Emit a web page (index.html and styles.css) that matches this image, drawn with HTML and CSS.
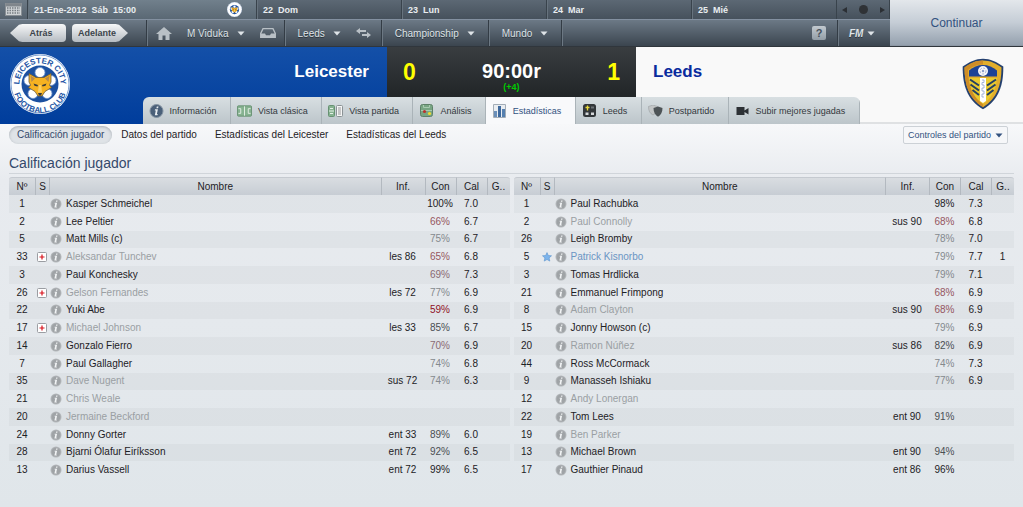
FILE: index.html
```html
<!DOCTYPE html>
<html lang="es">
<head>
  <meta charset="UTF-8"/>
  <meta name="viewport" content="width=device-width, initial-scale=1.0"/>
  <title>Leicester 0 - 1 Leeds</title>
  <link rel="stylesheet" href="styles.css">
</head>
<body>

<!-- shared icons -->
<svg class="sprite" aria-hidden="true">
  <symbol id="i-info" viewBox="0 0 12 12">
    <circle cx="6" cy="6" r="5.5" fill="#b3b7ba"/>
    <circle cx="6" cy="6" r="4.5" fill="#9fa3a6"/>
    <path d="M6.2 2.4h1.4l-.3 1.3H5.9z M4.7 4.7h2.4l-.9 4h.7l-.2.9H4.4l.9-4h-.8z" fill="#f2f4f5"/>
  </symbol>
  <symbol id="i-inj" viewBox="0 0 10 10">
    <rect x=".5" y=".5" width="9" height="9" rx="1" fill="#fff" stroke="#9a9da2"/>
    <path d="M4.4 2.5h1.2v1.9h1.9v1.2H5.6v1.900H4.400V5.600H2.500V4.400h1.900z" fill="#d8121c"/>
  </symbol>
  <symbol id="i-star" viewBox="0 0 10 10">
    <path d="M5 .6l1.300 2.900 3.200.3-2.400 2.100.7 3.200L5 7.500 2.200 9.100l.7-3.200L.5 3.800l3.200-.3z" fill="#7db4ec" stroke="#5a93cf" stroke-width=".6"/>
  </symbol>
  <symbol id="i-down" viewBox="0 0 8 5">
    <path d="M.5.5h7L4 4.500z" fill="currentColor"/>
  </symbol>
  <symbol id="i-lcfc" viewBox="0 0 60 60">
    <circle cx="30" cy="30" r="30" fill="#fff"/>
    <circle cx="30" cy="30" r="29" fill="none" stroke="#5c86c4" stroke-width=".8"/>
    <circle cx="30" cy="30" r="18.500" fill="#1b50a0"/>
    <g fill="#fff" stroke="#6f93cb" stroke-width=".8">
      <circle cx="30" cy="18.500" r="5"/><circle cx="41" cy="26.500" r="5"/><circle cx="37" cy="39.500" r="5"/>
      <circle cx="23" cy="39.500" r="5"/><circle cx="19" cy="26.500" r="5"/>
    </g>
    <path d="M19 19.500l7 4h8l7-4v8.500l-1.500 3 2 2.500-6.500 4-3 4.500h-4l-3-4.500-6.500-4 2-2.500L19 28z" fill="#f6b221" stroke="#6d5a3a" stroke-width=".8"/>
    <path d="M20.500 21.500l4.500 3-3.500 3.500zM39.500 21.500l-4.500 3 3.500 3.500z" fill="#b98a4a"/>
    <path d="M23.500 29.500l4.500 1.500-.5 1.500-3-.8zM36.500 29.500L32 31l.5 1.500 3-.8zM28 39h4l-1 2.500h-2z" fill="#3b3a38"/>
    <path d="M29 31l-1.200 7.500h4.400L31 31z" fill="#fbcf62"/>
  </symbol>
</svg>

<header class="topbar">
  <div class="bars">
    <div class="calendar">
      <button class="cal-btn" aria-label="Calendario">
        <svg width="17" height="13" viewBox="0 0 17 13"><rect x=".5" y=".5" width="16" height="12" fill="#cfd3d6" stroke="#888e94"/><path d="M1 2h15" stroke="#80868c" stroke-width="3"/><path d="M2 5h13M2 7.500h13M2 10h13" stroke="#777d83" stroke-width="1.500" stroke-dasharray="1.500 1"/></svg>
      </button>
      <div class="day today"><b>21-Ene-2012</b> <b>Sáb</b> <b>15:00</b>
        <svg class="mini-crest" width="15" height="15"><use href="#i-lcfc"/></svg>
      </div>
      <div class="day"><b>22</b> <b>Dom</b></div>
      <div class="day"><b>23</b> <b>Lun</b></div>
      <div class="day"><b>24</b> <b>Mar</b></div>
      <div class="day"><b>25</b> <b>Mié</b></div>
      <div class="pager">
        <button aria-label="Anterior"><svg width="5" height="6" viewBox="0 0 5 6"><path d="M5 0v6L0 3z" fill="#2b2f34"/></svg></button>
        <button aria-label="Hoy"><svg width="9" height="9" viewBox="0 0 9 9"><circle cx="4.500" cy="4.500" r="4.500" fill="#2f3236"/></svg></button>
        <button aria-label="Siguiente"><svg width="5" height="6" viewBox="0 0 5 6"><path d="M0 0v6l5-3z" fill="#2b2f34"/></svg></button>
      </div>
    </div>

    <nav class="menubar">
      <div class="history">
        <button class="back">Atrás</button>
        <button class="forward">Adelante</button>
      </div>
      <div class="group user">
        <button aria-label="Inicio"><svg width="16" height="13" viewBox="0 0 16 13"><path d="M8 0l8 7h-2.500v6H9.500V8.500h-3V13h-4V7H0z" fill="#b9c0c6"/></svg></button>
        <button class="menu">M Viduka <svg width="8" height="5"><use href="#i-down"/></svg></button>
        <button aria-label="Mensajes"><svg width="16" height="10" viewBox="0 0 16 10"><path d="M3 .7h10l2.300 4.800v3.800H.7V5.500z" fill="none" stroke="#b9c0c6" stroke-width="1.300"/><path d="M.7 5.500H5l1 1.700h4l1-1.700h4.300v4H.7z" fill="#b9c0c6"/></svg></button>
      </div>
      <div class="group club">
        <button class="menu">Leeds <svg width="8" height="5"><use href="#i-down"/></svg></button>
        <button aria-label="Cambiar"><svg width="15" height="10" viewBox="0 0 15 10"><path d="M0 3l4-3v2h6v2H4v2zM15 7l-4-3v2H6v2h5v2z" fill="#b9c0c6"/></svg></button>
      </div>
      <div class="group"><button class="menu">Championship <svg width="8" height="5"><use href="#i-down"/></svg></button></div>
      <div class="group"><button class="menu">Mundo <svg width="8" height="5"><use href="#i-down"/></svg></button></div>
      <div class="group help"><button class="help-btn">?</button></div>
      <div class="group fm"><button class="menu"><b>FM</b> <svg width="8" height="5"><use href="#i-down"/></svg></button></div>
    </nav>
  </div>
  <button class="continue">Continuar</button>
</header>

<section class="match">
  <div class="team home">
    <svg width="60" height="60" viewBox="0 0 60 60" aria-label="Leicester City">
      <use href="#i-lcfc" width="60" height="60"/>
      <defs>
        <path id="arc-top" d="M12.200 40.300a20.600 20.600 0 1 1 35.600 0"/>
        <path id="arc-bottom" d="M3.200 32a26.800 26.800 0 0 0 53.600 0"/>
      </defs>
      <text class="crest-text"><textPath href="#arc-top" startOffset="50%">LEICESTER CITY</textPath></text>
      <text class="crest-text"><textPath href="#arc-bottom" startOffset="50%">FOOTBALL CLUB</textPath></text>
    </svg>
    <h2>Leicester</h2>
  </div>
  <div class="score">
    <span class="goals">0</span>
    <div class="clock"><span>90:00r</span><small>(+4)</small></div>
    <span class="goals">1</span>
  </div>
  <div class="team away">
    <h2>Leeds</h2>
    <svg width="42" height="52" viewBox="0 0 42 52" aria-label="Leeds United">
      <path d="M21 .7C28 .7 35 4 41.300 8.500 41.500 27 37 42 21 51.300 5 42 .5 27 .7 8.500 7 4 14 .7 21 .7z" fill="#24406f"/>
      <path d="M21 2.500c7 0 13 2.800 18.500 7C39.500 27 35 40.500 21 49.300 7 40.500 2.500 27 2.500 9.500 8 5.300 14 2.500 21 2.500z" fill="#e2ae2c"/>
      <path d="M2.500 9.500C8 5.300 14 2.500 21 2.500v4C15 6.500 10 8.500 6 12c0 14 4 26 15 34v3.300C7 40.500 2.500 27 2.500 9.500z" fill="#cf8d27"/>
      <path d="M7 18.500v-6C11 9 16 7 21 7s10 2 14 5.500v6z" fill="#1c4296"/>
      <path d="M7 20h28C34 31 30 40 21 46 12 40 8 31 7 20z" fill="#e9c92f"/>
      <path d="M8 21.500l9 6M8.500 26.500l8.500 6M10.500 32l6.500 5M34 21.500l-9 6M33.500 26.500l-8.500 6M31.500 32L25 37" stroke="#243f63" stroke-width="2"/>
      <path d="M18 20h6v23l-3 2-3-2z" fill="#fff"/>
      <path d="M20 22h2v2.500h-2V27h2v3h-2v3h2v3h-2v3h2" fill="none" stroke="#93a4d0" stroke-width=".8"/>
      <circle cx="21" cy="13" r="5" fill="#f5f5f8"/>
      <circle cx="21" cy="13" r="3" fill="none" stroke="#a9b5d6" stroke-dasharray="2 1.500"/>
      <circle cx="21" cy="13" r="1.200" fill="#8b9cc8"/>
    </svg>
  </div>

  <nav class="tabs">
    <a href="#"><svg width="15" height="14" viewBox="0 0 14 14"><circle cx="7" cy="7" r="6.500" fill="#4a6079" stroke="#8392a1"/><path d="M7.300 2.500H9l-.4 1.700H6.900zM5.500 5.300h2.900l-1 4.700h.8l-.2 1.200H5.300L6.300 6.500h-1z" fill="#e8edf1"/></svg>Información</a>
    <a href="#"><svg width="15" height="12" viewBox="0 0 16 12"><rect x=".5" y=".5" width="15" height="11" rx="1" fill="#86b290" stroke="#679172"/><path d="M8 1v10M1.500 3.500H4v5H1.500M14.500 3.500H12v5h2.500" fill="none" stroke="#e5f0e6"/></svg>Vista clásica</a>
    <a href="#"><svg width="15" height="12" viewBox="0 0 15 12"><rect x=".5" y=".5" width="6" height="11" rx="1" fill="#86b290" stroke="#679172"/><path d="M1 6h5M2 3.500h3M2 8.500h3" stroke="#e5f0e6"/><rect x="8.500" y=".5" width="6" height="11" rx="1" fill="#f4f5f5" stroke="#8b9295"/><path d="M10 3h3M10 5h3M10 7h3M10 9h3" stroke="#999"/></svg>Vista partida</a>
    <a href="#"><svg width="15" height="13" viewBox="0 0 13 13"><rect x=".5" y=".5" width="12" height="12" rx="2" fill="#78a583" stroke="#5e8168"/><path d="M3.500 1v2.500h6V1M1 6.500h11" fill="none" stroke="#a9cbb0"/><circle cx="4.500" cy="7.500" r="1.600" fill="#b9332c"/><circle cx="9.500" cy="9.500" r="1.600" fill="#f0dc2d"/></svg>Análisis</a>
    <a href="#" class="active"><svg width="15" height="14" viewBox="0 0 13 14"><path d="M.5.5h12v13H.5z" fill="#e9edf1" stroke="#a3adb7"/><path d="M1 7h3v6H1z" fill="#6a8fb9"/><path d="M5 2h3v11H5z" fill="#3e699d"/><path d="M9 5h3v8H9z" fill="#5580b0"/></svg>Estadísticas</a>
    <a href="#"><svg width="15" height="13" viewBox="0 0 13 13"><rect width="13" height="13" rx="2.500" fill="#33373a"/><path d="M4.500 1.500v5M2.500 3.500h4" stroke="#e9d93a" stroke-width="1.300"/><path d="M8 2.500h3v2H8z" fill="#6d7275"/><path d="M2.500 8.500h3v2.500h-3zM8 8.500h3V11H8z" fill="#d5d8da"/></svg>Leeds</a>
    <a href="#"><svg width="15" height="12" viewBox="0 0 14 12"><path d="M0 1.500L4.500 0 9 1.500C9 6 7.500 8.500 4.500 10 1.500 8.500 0 6 0 1.500z" fill="#c3c6c7" stroke="#9ba0a2" stroke-width=".6"/><path d="M5 3l4.500-1.500L14 3c0 4-1.500 7-4.500 8.800C6.500 10 5 7 5 3z" fill="#4e5457"/></svg>Postpartido</a>
    <a href="#"><svg width="15" height="8" viewBox="0 0 12 8"><path d="M0 0h8v8H0zM8 3.500L12 1v6.500L8 5z" fill="#2d3135"/></svg>Subir mejores jugadas</a>
  </nav>
</section>

<main>
  <div class="subnav">
    <a href="#" class="active">Calificación jugador</a>
    <a href="#">Datos del partido</a>
    <a href="#">Estadísticas del Leicester</a>
    <a href="#">Estadísticas del Leeds</a>
    <button class="controls">Controles del partido <svg width="8" height="5"><use href="#i-down"/></svg></button>
  </div>

  <h1>Calificación jugador</h1>

  <div class="ratings">
    <table id="leicester"></table>
    <table id="leeds"></table>
  </div>
</main>

<script>
  // number, status icon, name, name style, info, condition, rating, goals
  const leicester = [
    [1, "", "Kasper Schmeichel", "", "", 100, "7.0"],
    [2, "", "Lee Peltier", "", "", 66, "6.7"],
    [5, "", "Matt Mills (c)", "", "", 75, "6.7"],
    [33, "inj", "Aleksandar Tunchev", "out", "les 86", 65, "6.8"],
    [3, "", "Paul Konchesky", "", "", 69, "7.3"],
    [26, "inj", "Gelson Fernandes", "out", "les 72", 77, "6.9"],
    [22, "", "Yuki Abe", "", "", 59, "6.9"],
    [17, "inj", "Michael Johnson", "out", "les 33", 85, "6.7"],
    [14, "", "Gonzalo Fierro", "", "", 70, "6.9"],
    [7, "", "Paul Gallagher", "", "", 74, "6.8"],
    [35, "", "Dave Nugent", "out", "sus 72", 74, "6.3"],
    [21, "", "Chris Weale", "out"],
    [20, "", "Jermaine Beckford", "out"],
    [24, "", "Donny Gorter", "", "ent 33", 89, "6.0"],
    [28, "", "Bjarni Ólafur Eiríksson", "", "ent 72", 92, "6.5"],
    [13, "", "Darius Vassell", "", "ent 72", 99, "6.5"]
  ];
  const leeds = [
    [1, "", "Paul Rachubka", "", "", 98, "7.3"],
    [2, "", "Paul Connolly", "out", "sus 90", 68, "6.8"],
    [26, "", "Leigh Bromby", "", "", 78, "7.0"],
    [5, "star", "Patrick Kisnorbo", "best", "", 79, "7.7", 1],
    [3, "", "Tomas Hrdlicka", "", "", 79, "7.1"],
    [21, "", "Emmanuel Frimpong", "", "", 68, "6.9"],
    [8, "", "Adam Clayton", "out", "sus 90", 68, "6.9"],
    [15, "", "Jonny Howson (c)", "", "", 79, "6.9"],
    [20, "", "Ramon Núñez", "out", "sus 86", 82, "6.9"],
    [44, "", "Ross McCormack", "", "", 74, "7.3"],
    [9, "", "Manasseh Ishiaku", "", "", 77, "6.9"],
    [12, "", "Andy Lonergan", "out"],
    [22, "", "Tom Lees", "", "ent 90", 91],
    [19, "", "Ben Parker", "out"],
    [13, "", "Michael Brown", "", "ent 90", 94],
    [17, "", "Gauthier Pinaud", "", "ent 86", 96]
  ];

  function conClass(con) {
    if (con < 60) return "critical";
    if (con < 69) return "low";
    if (con < 72) return "tired";
    if (con < 80) return "mid";
    if (con < 95) return "good";
    return "full";
  }

  function row([num, status, name, style, inf = "", con, cal = "", goals = ""]) {
    const icon = status ? `<svg width="10" height="10"><use href="#i-${status}"/></svg>` : "";
    return `<tr>
      <td>${num}</td>
      <td class="status">${icon}</td>
      <td class="name ${style}"><div><button aria-label="Información de ${name}"><svg width="12" height="12"><use href="#i-info"/></svg></button>${name}</div></td>
      <td>${inf}</td>
      <td class="${con ? conClass(con) : ""}">${con ? con + "%" : ""}</td>
      <td>${cal}</td>
      <td>${goals}</td>
    </tr>`;
  }

  function fillTable(id, players) {
    document.getElementById(id).innerHTML = `
      <thead><tr>
        <th class="c-num">Nº</th><th class="c-status">S</th><th>Nombre</th><th class="c-inf">Inf.</th>
        <th class="c-con">Con</th><th class="c-cal">Cal</th><th class="c-goals">G..</th>
      </tr></thead>
      <tbody>${players.map(row).join("")}</tbody>`;
  }

  fillTable("leicester", leicester);
  fillTable("leeds", leeds);
</script>
</body>
</html>
```
FILE: styles.css
```css
:root {
  --ink: #1d2125;
  --navy: #34496b;
  --bar-text: #e9edf0;
}

* {
  box-sizing: border-box;
}

body {
  margin: 0;
  min-height: 100vh;
  font-family: "Liberation Sans", Arial, sans-serif;
  font-size: 10px;
  color: var(--ink);
  background: linear-gradient(#f7f8fa 124px, #e8ebef 180px, #e5e9ed 320px, #e0e6ea);
}

button {
  padding: 0;
  border: none;
  background: none;
  font: inherit;
  color: inherit;
  cursor: pointer;
}

a {
  color: inherit;
  text-decoration: none;
}

svg {
  display: block;
  flex: none;
}

.sprite {
  display: none;
}

/* top bars */
.topbar {
  display: grid;
  grid-template-columns: 1fr 133px;
  border-bottom: 1px solid #30363c;
}

.calendar {
  display: grid;
  grid-template-columns: 28px 229fr 145fr 145fr 145fr 145fr 53px;
  height: 19px;
  font-size: 9px;
  color: var(--bar-text);
  background: linear-gradient(#5c6874, #46515c);
}

.calendar > * {
  display: flex;
  align-items: center;
  border-right: 1px solid #39434c;
}

.cal-btn {
  justify-content: center;
  background: linear-gradient(#6d7a86, #55616d);
}

.day {
  gap: 5px;
  padding-left: 5px;
  border-left: 1px solid #67737e;
}

.today {
  background: linear-gradient(#71808c, #5a6874);
}

.mini-crest {
  margin-left: auto;
  margin-right: 14px;
}

.pager {
  justify-content: center;
  gap: 12px;
}

.menubar {
  display: flex;
  height: 27px;
  color: #dfe4e8;
  background: linear-gradient(#6c7986, #3b454f);
  border-top: 1px solid #8390a0;
}

.history {
  display: flex;
  align-items: center;
  gap: 6px;
  width: 146px;
  padding-left: 10px;
}

.history button {
  width: 56px;
  height: 18px;
  font-size: 9px;
  font-weight: bold;
  color: #3c444c;
  background: linear-gradient(#f7f8f9, #b5bbc1);
}

.history .back {
  padding-left: 6px;
  border-radius: 4px;
  clip-path: polygon(0 50%, 16% 4%, 22% 0, 100% 0, 100% 100%, 22% 100%, 16% 96%);
}

.history .forward {
  padding-right: 6px;
  border-radius: 4px;
  clip-path: polygon(100% 50%, 84% 4%, 78% 0, 0 0, 0 100%, 78% 100%, 84% 96%);
}

.group {
  display: flex;
  align-items: center;
  padding: 0 13px;
  border-left: 1px solid #333c45;
  box-shadow: inset 1px 0 #6c7883;
}

.user {
  gap: 15px;
  padding: 0 8px 0 9px;
}

.club {
  gap: 15px;
  padding-right: 10px;
}

.menu {
  display: flex;
  align-items: center;
  gap: 8px;
  text-shadow: 0 1px #2c343b;
}

.fm {
  width: 53px;
  padding: 0 11px;
}

.fm b {
  font-style: italic;
}

.fm .menu {
  gap: 4px;
}

.help {
  flex: 1;
  justify-content: flex-end;
  padding-right: 11px;
}

.help-btn {
  width: 14px;
  height: 14px;
  border-radius: 2px;
  font-weight: bold;
  font-size: 11px;
  line-height: 14px;
  color: #46515c;
  background: linear-gradient(#c2c9cf, #929da6);
}

.continue {
  font-size: 12px;
  color: #33527f;
  background: linear-gradient(#e3e7eb, #c5cdd6 50%, #95a1ae);
  border-bottom: 1px solid #8d98a5;
}

/* scoreboard */
.match {
  display: grid;
  grid-template-columns: 1fr 249px 1fr;
  grid-template-rows: 50px 27px;
}

.team {
  grid-row: 1 / 3;
  display: flex;
  justify-content: space-between;
}

.team h2 {
  margin: 0;
  font-size: 17px;
  line-height: 50px;
}

.home {
  grid-column: 1;
  padding: 7px 18px 0 10px;
  color: #fff;
  background: linear-gradient(#1450a8, #003d9c);
}

.home h2,
.away h2 {
  margin-top: -7px;
}

.away {
  grid-column: 3;
  padding: 7px 19px 0 17px;
  color: #0a2b9e;
  background: #f9f9f9;
  border-bottom: 2px solid #dfe1e3;
}

.away svg {
  margin-top: 4px;
}

.crest-text {
  font-size: 8px;
  font-weight: bold;
  text-anchor: middle;
  fill: #2455a4;
}

.score {
  grid-column: 2;
  grid-row: 1;
  display: flex;
  justify-content: space-between;
  align-items: center;
  padding: 0 16px;
  color: #fff;
  background: linear-gradient(#393d40, #212527);
}

.goals {
  font-size: 23px;
  font-weight: bold;
  color: #ff0;
}

.clock {
  display: flex;
  flex-direction: column;
  align-items: center;
  padding-top: 7px;
  font-size: 20px;
  font-weight: bold;
  line-height: 22px;
}

.clock small {
  font-size: 9px;
  line-height: 10px;
  color: #0c0;
}

.tabs {
  grid-column: 1 / -1;
  grid-row: 2;
  justify-self: center;
  display: flex;
  width: 717px;
  margin-right: 21px;
  border-radius: 6px 6px 0 0;
  overflow: hidden;
}

.tabs a {
  flex: auto;
  display: flex;
  align-items: center;
  gap: 6px;
  padding: 0 8px 0 6px;
  font-size: 9px;
  color: #33383c;
  background: linear-gradient(#d8dfe2, #bcc5ca);
  border-right: 1px solid #aab3b8;
}

.tabs .active {
  color: #33527f;
  background: #f8f9fb;
}

/* page */
main {
  padding: 2px 9px 0;
}

.subnav {
  display: flex;
  align-items: center;
  height: 18px;
}

.subnav a {
  padding: 0 9px;
  line-height: 18px;
}

.subnav .active {
  padding: 0 8px;
  color: var(--navy);
  background: #dfe3e7;
  border-radius: 9px;
  box-shadow: inset 0 1px 3px #aab0b7;
}

.controls {
  display: flex;
  align-items: center;
  gap: 4px;
  height: 18px;
  margin-left: auto;
  margin-right: 6px;
  padding: 0 4px;
  font-size: 9px;
  color: #33527f;
  background: #f6f7f9;
  border: 1px solid #ccd1d6;
  border-radius: 2px;
}

h1 {
  margin: 9px 0 3px;
  padding-bottom: 0;
  font-size: 14px;
  font-weight: normal;
  line-height: 20px;
  color: var(--navy);
  border-bottom: 1px solid #d0d5da;
}

.ratings {
  display: grid;
  grid-template-columns: 1fr 1fr;
  gap: 4px;
}

table {
  width: 100%;
  height: 302px;
  table-layout: fixed;
  border-collapse: separate;
  border-spacing: 0;
  text-align: center;
}

th {
  height: 18px;
  padding: 0;
  font-weight: normal;
  background: linear-gradient(#d9dde1, #c7cdd4);
  border-top: 1px solid #c5cad0;
  border-left: 1px solid #b3b9c0;
}

th:first-child {
  border-left: none;
  border-radius: 3px 0 0 0;
}

th:last-child {
  border-radius: 0 3px 0 0;
}

.c-num { width: 26px; }
.c-status { width: 14px; }
.c-inf { width: 44px; }
.c-con { width: 31px; }
.c-cal { width: 31px; }
.c-goals { width: 23px; }

td {
  padding: 0;
  line-height: 16px;
}

tbody tr:nth-child(odd) {
  background: rgba(60, 70, 85, 0.04);
}

.status svg {
  margin: 0 auto;
}

.name div {
  display: flex;
  align-items: center;
  gap: 4px;
  padding-left: 1px;
}

.name.out { color: #9a9fa3; }
.name.best { color: #6b95c4; }

.good { color: #4a4f53; }
.mid { color: #84898d; }
.tired { color: #8a6a74; }
.low { color: #955660; }
.critical { color: #8f1024; }
```
